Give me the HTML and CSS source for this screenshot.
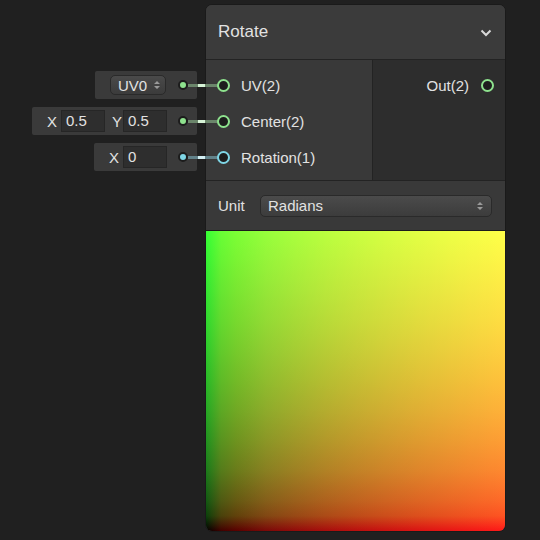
FILE: index.html
```html
<!DOCTYPE html>
<html>
<head>
    <meta charset="utf-8">
    <title>Rotate</title>
    <link rel="stylesheet" href="styles.css">
</head>
<body>
    <div class="node">
        <div class="node-header">
            <span class="node-title">Rotate</span>
            <svg class="chevron" width="12" height="8" viewBox="0 0 12 8"><path d="M1.5 1.5 L6 6 L10.5 1.5" fill="none" stroke="#d8d8d8" stroke-width="2"/></svg>
        </div>

        <div class="ports">
            <div class="inputs">
                <div class="port-row">
                    <div class="field-box">
                        <div class="mini-select">UV0
                            <svg width="6" height="10" viewBox="0 0 6 10"><path d="M0 4 L3 1 L6 4 Z M0 6 L3 9 L6 6 Z" fill="#9a9a9a"/></svg>
                        </div>
                        <span class="dot green"></span>
                    </div>
                    <span class="wire green"></span>
                    <span class="port green"></span>
                    <span class="port-label">UV(2)</span>
                </div>
                <div class="port-row">
                    <div class="field-box">
                        <span class="axis">X</span><span class="field">0.5</span>
                        <span class="axis axis-y">Y</span><span class="field">0.5</span>
                        <span class="dot green"></span>
                    </div>
                    <span class="wire green"></span>
                    <span class="port green"></span>
                    <span class="port-label">Center(2)</span>
                </div>
                <div class="port-row">
                    <div class="field-box">
                        <span class="axis">X</span><span class="field">0</span>
                        <span class="dot blue"></span>
                    </div>
                    <span class="wire blue"></span>
                    <span class="port blue"></span>
                    <span class="port-label">Rotation(1)</span>
                </div>
            </div>
            <div class="outputs">
                <div class="port-row out-row">
                    <span class="port-label">Out(2)</span>
                    <span class="port green"></span>
                </div>
            </div>
        </div>

        <div class="unit-row">
            <span class="unit-label">Unit</span>
            <div class="select">
                <span>Radians</span>
                <svg width="6" height="10" viewBox="0 0 6 10"><path d="M0 4 L3 1 L6 4 Z M0 6 L3 9 L6 6 Z" fill="#9a9a9a"/></svg>
            </div>
        </div>

        <div class="preview"></div>
    </div>
</body>
</html>
```

FILE: styles.css
```css
body {
    margin: 0;
    background-color: #202020;
    color: #e2e2e2;
    font-family: "Liberation Sans", Arial, sans-serif;
    width: 540px;
    height: 540px;
    position: relative;
    overflow: hidden;
}

.node {
    position: absolute;
    left: 205px;
    top: 4px;
    width: 299px;
    border: 1px solid #1a1a1a;
    border-radius: 7px;
    background-color: #393939;
}

.node-header {
    height: 54px;
    border-bottom: 1px solid #232323;
    border-radius: 6px 6px 0 0;
    background-color: #3b3b3b;
    display: flex;
    align-items: center;
    justify-content: space-between;
    padding: 0 13px 0 12px;
}

.node-title {
    font-size: 17px;
}

.chevron {
    margin-top: 2px;
}

.ports {
    display: flex;
    height: 120px;
    border-bottom: 1px solid #232323;
}

.inputs {
    width: 166px;
    padding-top: 7px;
    background-color: #393939;
}

.outputs {
    flex: 1;
    padding-top: 7px;
    background-color: #2d2d2d;
    border-left: 1px solid #232323;
}

.port-row {
    position: relative;
    height: 36px;
    display: flex;
    align-items: center;
    padding-left: 11px;
}

.out-row {
    justify-content: flex-end;
    padding-left: 0;
    padding-right: 11px;
}

.port {
    box-sizing: border-box;
    width: 13px;
    height: 13px;
    border-radius: 50%;
    border: 2px solid #8ee28e;
    background-color: #1d1d1d;
    position: relative;
}

.port.blue {
    border-color: #7fd6e6;
}

.port-label {
    font-size: 15px;
    margin-left: 11px;
}

.out-row .port-label {
    margin-left: 0;
    margin-right: 12px;
}

.field-box {
    position: absolute;
    right: calc(100% + 9px);
    top: 4px;
    height: 28px;
    display: flex;
    align-items: center;
    padding: 0 9px 0 15px;
    background-color: #3a3a3a;
    border-radius: 2px;
    font-size: 15px;
    white-space: nowrap;
}

.axis {
    width: 10px;
    margin-right: 4px;
}

.axis-y {
    margin-left: -4px;
    margin-right: 1px;
}

.field {
    box-sizing: border-box;
    width: 44px;
    height: 22px;
    line-height: 20px;
    padding-left: 4px;
    background-color: #2e2e2e;
    border: 1px solid #262626;
    margin-right: 11px;
}

.mini-select {
    box-sizing: border-box;
    width: 56px;
    height: 20px;
    display: flex;
    align-items: center;
    justify-content: space-between;
    padding: 0 5px 0 7px;
    border: 1px solid #2a2a2a;
    border-radius: 5px;
    background: linear-gradient(#4a4a4a, #3b3b3b);
    margin-right: 12px;
}

.dot {
    box-sizing: border-box;
    width: 10px;
    height: 10px;
    border-radius: 50%;
    border: 2px solid #1c1c1c;
    background-color: #8ee28e;
}

.dot.blue {
    background-color: #7fd6e6;
}

.wire {
    position: absolute;
    left: -18px;
    width: 30px;
    top: 50%;
    height: 3px;
    margin-top: -1px;
    background: linear-gradient(to right, #6b866b 0 10px, #d6f3d6 10px 17px, #6b866b 17px);
}

.wire.blue {
    background: linear-gradient(to right, #62828a 0 10px, #d2eef2 10px 17px, #62828a 17px);
}

.unit-row {
    height: 49px;
    border-bottom: 1px solid #1c1c1c;
    display: flex;
    align-items: center;
    padding-left: 12px;
    font-size: 15px;
}

.unit-label {
    width: 42px;
}

.select {
    box-sizing: border-box;
    width: 232px;
    height: 22px;
    display: flex;
    align-items: center;
    justify-content: space-between;
    padding: 0 8px 0 7px;
    border: 1px solid #2a2a2a;
    border-radius: 5px;
    background: linear-gradient(#4b4b4b, #3c3c3c);
}

/* uv preview: red = u, green = v, gamma-encoded ramps */
.preview {
    height: 300px;
    border-radius: 0 0 6px 6px;
    background:
        linear-gradient(to top, #000 0%, #0b410b 5%, #125912 10%, #1a7b1a 20%, #1f931f 30%, #24a824 40%, #27ba27 50%, #2bca2b 60%, #2ed92e 70%, #31e631 80%, #33f333 90%, #35ff35 100%),
        linear-gradient(to right, #000 0%, #410000 5%, #590000 10%, #7b0808 20%, #930a0a 30%, #a80c0c 40%, #ba0e0e 50%, #ca1010 60%, #d91212 70%, #e61414 80%, #f31616 90%, #ff1818 100%);
    background-blend-mode: screen;
}
```
